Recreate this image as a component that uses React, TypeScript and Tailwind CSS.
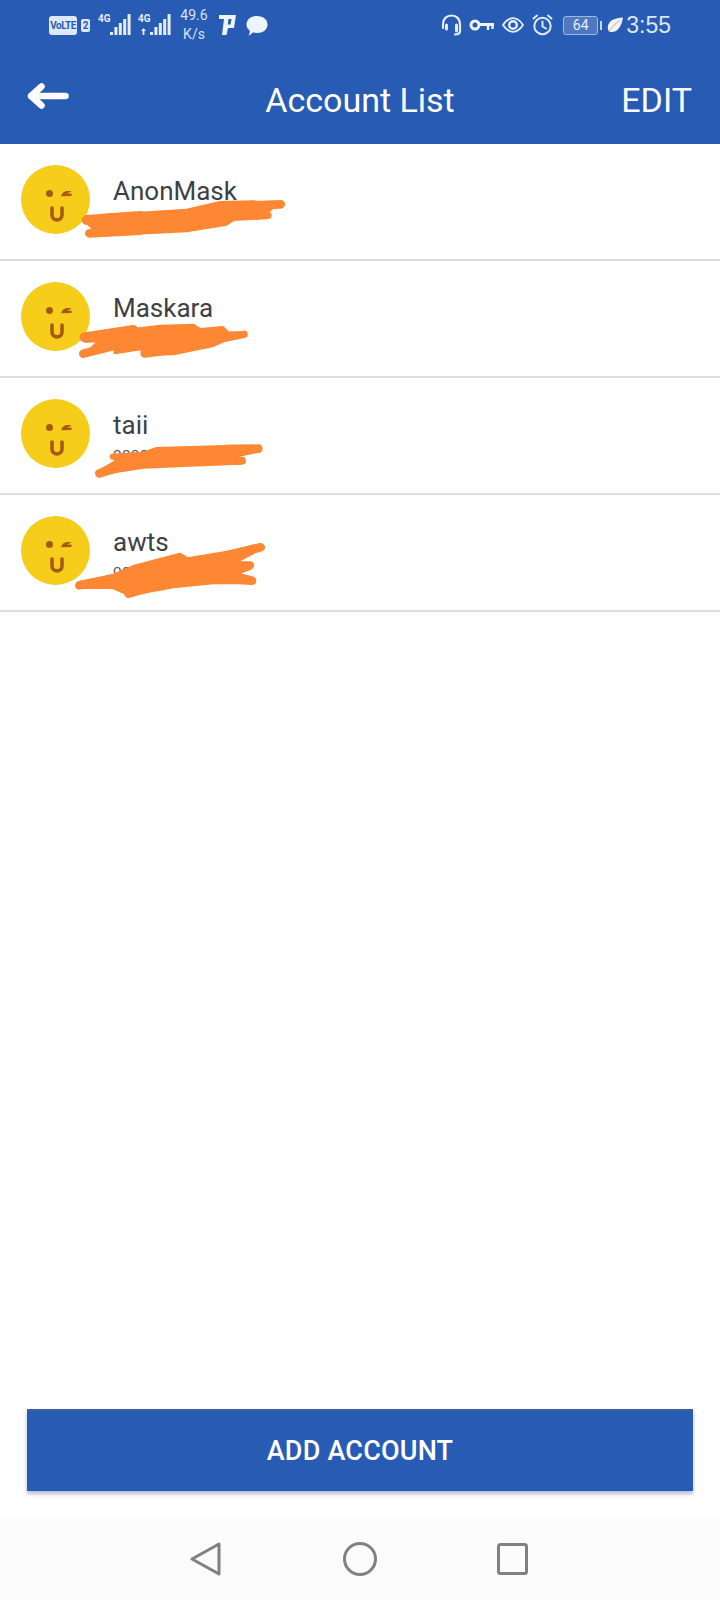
type Tip = { d: string; w: number }

const accounts: { name: string; box: string; scribble: string; tips: Tip[] }[] = [
  {
    name: 'AnonMask',
    box: '0 -18 900 351',
    scribble:
      'M262 206 L300 198 L560 181 L660 158 L760 156 L830 164 L806 182 L800 203 L700 208 L680 222 L560 242 L272 256 L279 235 L262 218 Z',
    tips: [
      { d: 'M700 168 L842 163', w: 26 },
      { d: 'M700 196 L804 196', w: 22 },
      { d: 'M268 250 L420 242', w: 26 },
      { d: 'M260 210 L420 198', w: 30 },
    ],
  },
  {
    name: 'Maskara',
    box: '0 333 900 351',
    scribble:
      'M256 564 L300 551 L480 529 L580 526 L600 539 L668 533 L683 549 L720 549 L640 586 L520 611 L440 612 L422 596 L345 608 L347 591 L256 612 L300 572 L256 573 Z',
    tips: [
      { d: 'M253 562 L400 540', w: 30 },
      { d: 'M250 611 L340 588', w: 26 },
      { d: 'M434 610 L560 594', w: 26 },
      { d: 'M620 576 L732 553', w: 22 },
    ],
  },
  {
    name: 'taii',
    box: '0 -36 900 351',
    scribble:
      'M345 208 L430 190 L470 176 L700 169 L760 170 L768 185 L700 199 L722 207 L720 219 L550 226 L430 231 L308 250 L300 242 L349 214 Z',
    tips: [
      { d: 'M338 200 L430 194', w: 18 },
      { d: 'M680 177 L775 176', w: 26 },
      { d: 'M640 213 L726 212', w: 24 },
      { d: 'M298 250 L400 220', w: 26 },
    ],
  },
  {
    name: 'awts',
    box: '0 315 900 351',
    scribble:
      'M240 578 L340 556 L400 530 L540 493 L563 507 L700 484 L770 466 L775 480 L701 518 L750 522 L750 535 L706 552 L750 562 L750 578 L640 578 L520 590 L390 614 L372 607 L335 591 L240 592 Z',
    tips: [
      { d: 'M238 586 L340 566', w: 26 },
      { d: 'M680 496 L782 472', w: 26 },
      { d: 'M700 526 L750 526', w: 24 },
      { d: 'M680 566 L756 572', w: 26 },
      { d: 'M386 610 L470 585', w: 28 },
    ],
  },
]

function Face() {
  return (
    <svg width="69" height="69" viewBox="0 0 69 69" className="shrink-0">
      <circle cx="34.5" cy="34.5" r="34.5" fill="#f5cd1a" />
      <circle cx="28.5" cy="28.5" r="3.5" fill="#a9590f" />
      <path d="M50.5 26.2 C45.5 25.2 41 26.5 40.2 31.2 L50.5 31 L50.5 28.6 L46 28.8 Z" fill="#a9590f" />
      <path d="M31 43 V50 C31 56.5 41 56.5 41 50 V43" fill="none" stroke="#a9590f" strokeWidth="3.6" strokeLinecap="round" />
    </svg>
  )
}

function Signal({ data }: { data?: boolean }) {
  return (
    <svg width="24" height="24" viewBox="0 0 24 24" className="shrink-0 overflow-visible" fill="#e4edf8">
      {[3, 8, 12, 16, 21].map((h, i) => (
        <rect key={i} x={2 + i * 4.4} y={22 - h} width="3" height={h} />
      ))}
      {data && <path d="M-7 18 L-4.5 15 L-2 18 H-3.6 V22 H-5.4 V18 Z" />}
    </svg>
  )
}

function NetworkGroup({ data }: { data?: boolean }) {
  return (
    <div className="relative w-[34px] h-[24px]">
      <span className="absolute left-0 top-0 text-[10px] font-bold leading-[12px] text-[#e4edf8]">4G</span>
      <div className="absolute left-[10px] top-0">
        <Signal data={data} />
      </div>
    </div>
  )
}

function StatusLeft() {
  return (
    <div className="flex items-center">
      <span className="ml-[49px] w-[28px] h-[19px] rounded-[3px] bg-[#dce8f6] text-[#285bb3] text-[10px] font-bold leading-[19px] text-center tracking-tighter">
        VoLTE
      </span>
      <span className="ml-[4px] w-[9px] h-[13px] rounded-[2px] bg-[#dce8f6] text-[#285bb3] text-[10px] font-bold leading-[13px] text-center">
        2
      </span>
      <div className="ml-[8px]">
        <NetworkGroup />
      </div>
      <div className="ml-[6px]">
        <NetworkGroup data />
      </div>
      <div className="ml-[7px] w-[30px] flex flex-col items-center text-[14px] leading-[19px] text-[#d5e2f3]">
        <span>49.6</span>
        <span>K/s</span>
      </div>
      <svg width="17" height="22" viewBox="0 0 17 22" className="ml-[10px] shrink-0" fill="#eef4fb">
        <path fillRule="evenodd" d="M0 1 H17 L15 14 H9 L7.5 21 H3 L5 5 H0 Z M9.5 5 H12.5 L11.5 10.5 H8.8 Z" />
      </svg>
      <svg width="22" height="21" viewBox="0 0 22 21" className="ml-[10px] shrink-0" fill="#eef4fb">
        <path d="M11 1 C17 1 21.5 4.5 21.5 9.5 C21.5 14.5 17 18 11 18 C9.5 18 8 17.7 7 17.3 C6 18.5 4.5 20 2.5 20.5 C3.5 19 4 17 3.6 15.5 C1.8 14 0.5 12 0.5 9.5 C0.5 4.5 5 1 11 1 Z" />
      </svg>
    </div>
  )
}

function StatusRight() {
  return (
    <div className="flex items-center pr-[49px]">
      <svg width="21" height="22" viewBox="0 0 21 22" fill="none" stroke="#e4edf8" strokeWidth="2.2" strokeLinecap="round" className="shrink-0">
        <path d="M2 14 V10 C2 5 5.5 1.5 10.5 1.5 C15.5 1.5 19 5 19 10 V17 C19 19.5 17 20.5 14 20.5" />
        <path d="M5.5 11 V15 M15.5 11 V17" strokeWidth="3" />
      </svg>
      <svg width="25" height="14" viewBox="0 0 25 14" fill="none" stroke="#eef4fb" className="ml-[7px] shrink-0">
        <circle cx="6" cy="7" r="4" strokeWidth="3" />
        <path d="M10 6.5 H25" strokeWidth="3" />
        <path d="M19 7 V12 M23.5 7 V11" strokeWidth="2.4" />
      </svg>
      <svg width="22" height="16" viewBox="0 0 22 16" fill="none" stroke="#e4edf8" className="ml-[8px] shrink-0">
        <path d="M1 8 C4 3.5 7 1.2 11 1.2 C15 1.2 18 3.5 21 8 C18 12.5 15 14.8 11 14.8 C7 14.8 4 12.5 1 8 Z" strokeWidth="1.8" />
        <circle cx="11" cy="8" r="3.8" strokeWidth="2.4" />
      </svg>
      <svg width="21" height="22" viewBox="0 0 21 22" fill="none" stroke="#dde8f6" strokeWidth="2" strokeLinecap="round" className="ml-[8px] shrink-0">
        <circle cx="10.5" cy="12" r="8.2" />
        <path d="M10.5 7.5 V12.5 L14 14.5 M1.5 4.5 L5 1.5 M19.5 4.5 L16 1.5" />
      </svg>
      <div className="ml-[10px] w-[35px] h-[19px] rounded-[3px] border border-[#9db8e0] bg-[#5078c0] text-[#e4edf8] text-[14px] leading-[17px] text-center">
        64
      </div>
      <span className="ml-[2px] w-[2px] h-[9px] bg-[#c7d8ef]" />
      <svg width="16" height="16" viewBox="0 0 16 16" className="ml-[5px] shrink-0">
        <path d="M16 0.5 C8 1 1.5 3 0.8 10 C0.6 12.5 1.5 14 3 15 C11 16 14.5 9 16 0.5 Z" fill="#eef4fb" />
        <path d="M2 14.5 C5 9.5 9 6 13 3.5" stroke="#e8a878" strokeWidth="1" fill="none" />
      </svg>
      <span className="ml-[3px] text-[23px] leading-[24px] text-[#dbe6f5] font-['Liberation_Sans',sans-serif]">3:55</span>
    </div>
  )
}

function AccountRow({ name, box, scribble, tips }: { name: string; box: string; scribble: string; tips: Tip[] }) {
  return (
    <div className="relative h-[117px] border-b-2 border-[#dddddd] flex items-center pl-[21px] pb-[5px]">
      <Face />
      <div className="ml-[23px] pt-[6px] flex flex-col">
        <span className="text-[26px] leading-[30px] text-[#3d4145]">{name}</span>
        <span className="mt-[4px] text-[15px] leading-[18px] text-[#55595d] tracking-wide">oooooooooo</span>
      </div>
      <svg width="300" height="117" viewBox={box} className="absolute left-0 top-0" stroke="#fd8733" strokeLinecap="round" strokeLinejoin="round">
        <path d={scribble} fill="#fd8733" strokeWidth="10" />
        {tips.map((t, i) => (
          <path key={i} d={t.d} fill="none" strokeWidth={t.w} />
        ))}
      </svg>
    </div>
  )
}

export default function App() {
  return (
    <div className="w-[720px] h-[1600px] flex flex-col bg-white font-['Roboto',sans-serif]">
      <header className="h-[144px] bg-[#285bb3] flex flex-col text-white">
        <div className="h-[50px] flex items-center justify-between">
          <StatusLeft />
          <StatusRight />
        </div>
        <div className="relative flex-1 flex items-center justify-between pl-[27px] pr-[28px] pt-[6px]">
          <svg width="42" height="26" viewBox="0 0 42 26" fill="none" stroke="#ffffff" strokeWidth="6.5" strokeLinecap="round" strokeLinejoin="round" className="shrink-0 -mt-[8px]">
            <path d="M38.5 13 H4 M14.5 3.5 L4 13 L14.5 22.5" />
          </svg>
          <span className="absolute left-0 right-0 text-center text-[34px] leading-[40px] pointer-events-none">
            Account List
          </span>
          <span className="text-[34px] leading-[40px]">EDIT</span>
        </div>
      </header>

      <main className="flex-1">
        {accounts.map((a) => (
          <AccountRow key={a.name} name={a.name} box={a.box} scribble={a.scribble} tips={a.tips} />
        ))}
      </main>

      <div className="px-[27px] pb-[27px]">
        <button className="w-full h-[82px] bg-[#285bb3] border-t-2 border-[#3e629f] text-white text-[27px] font-medium tracking-[0.2px] shadow-[0_3px_4px_rgba(40,60,120,0.35)]">
          ADD ACCOUNT
        </button>
      </div>

      <nav className="h-[82px] bg-[#fbfbfb] flex items-center pb-[1px]">
        <svg width="32" height="34" viewBox="0 0 32 34" fill="none" stroke="#808080" strokeWidth="3" strokeLinejoin="round" className="ml-[190px] shrink-0">
          <path d="M29 2 V32 L2 17 Z" />
        </svg>
        <svg width="34" height="34" viewBox="0 0 34 34" fill="none" stroke="#808080" strokeWidth="3" className="ml-[121px] shrink-0">
          <circle cx="17" cy="17" r="15.5" />
        </svg>
        <svg width="31" height="32" viewBox="0 0 31 32" fill="none" stroke="#808080" strokeWidth="3" strokeLinejoin="round" className="ml-[120px] shrink-0">
          <rect x="1.5" y="1.5" width="28" height="29" rx="2" />
        </svg>
      </nav>
    </div>
  )
}
